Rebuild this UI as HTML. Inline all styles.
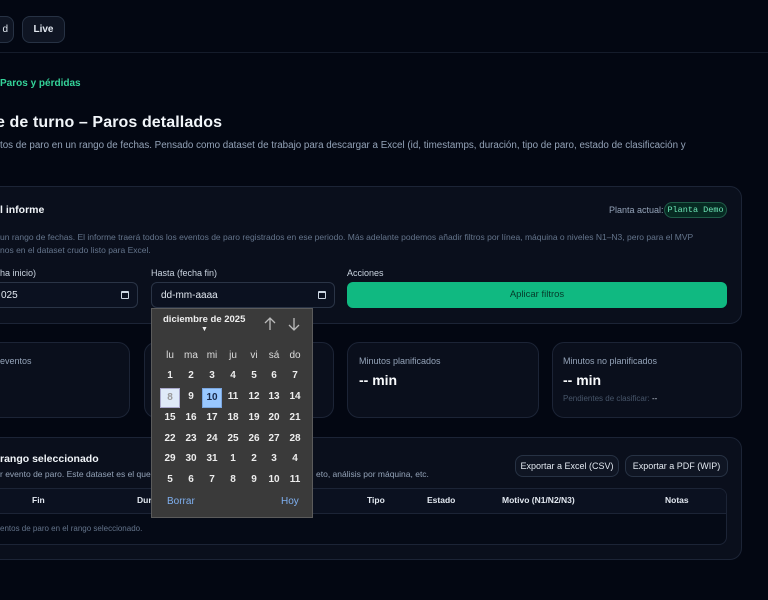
<!DOCTYPE html>
<html><head><meta charset="utf-8"><style>
*{box-sizing:border-box;margin:0;padding:0}
body{width:768px;height:600px;overflow:hidden;background:#030712;font-family:"Liberation Sans",sans-serif;color:#e2e8f0;position:relative}
.a{position:absolute;white-space:nowrap}
.card{position:absolute;background:#0a0f1c;border:1px solid #1c2436;border-radius:12px}
.btn{position:absolute;background:#0f1523;border:1px solid #273244;border-radius:8px;color:#e2e8f0;font-size:10px;display:flex;align-items:center;justify-content:center}
.muted{color:#64748b}
.lbl{font-size:9px;color:#cbd5e1}
.inp{position:absolute;background:#0b1120;border:1px solid #2a3446;border-radius:6px;height:26px;font-size:10px;color:#e2e8f0;padding-left:9px;line-height:26px}
.cal{position:absolute;right:8px;top:8px;width:8px;height:8px;border:1.3px solid #cbd5e1;border-top-width:2.5px;border-radius:1px}
.pop{position:absolute;left:151px;top:308px;width:162px;height:210px;background:#3a3a3a;border:1px solid #5b5b5b;font-size:10px;font-weight:bold;color:#eee}
.c{position:absolute;width:18px;height:18px;text-align:center;line-height:18px}
</style></head><body>
<div class="btn" style="left:-20px;top:16px;width:34px;height:27px;justify-content:flex-end;padding-right:5px">d</div>
<div class="btn" style="left:22px;top:16px;width:43px;height:27px;font-weight:bold">Live</div>
<div class="a" style="left:0;top:52px;width:768px;height:1px;background:#151c2b"></div>
<div class="a" style="left:0;top:78px;font-size:10px;color:#34d399;font-weight:bold">Paros y pérdidas</div>
<div class="a" style="left:-4px;top:114px;font-size:16px;font-weight:bold;color:#f1f5f9;letter-spacing:0.1px">e de turno – Paros detallados</div>
<div class="a" style="left:0;top:140px;font-size:9.8px;color:#94a3b8">tos de paro en un rango de fechas. Pensado como dataset de trabajo para descargar a Excel (id, timestamps, duración, tipo de paro, estado de clasificación y</div>

<div class="card" style="left:-20px;top:186px;width:762px;height:138px"></div>
<div class="a" style="left:0;top:204px;font-size:10.5px;font-weight:bold;color:#f1f5f9">l informe</div>
<div class="a" style="left:609px;top:205px;font-size:9px;color:#94a3b8">Planta actual:</div>
<div class="a" style="left:664px;top:202px;width:63px;height:16px;border:1px solid #1f5c48;background:#062a22;border-radius:8px;font-family:'Liberation Mono',monospace;font-size:8.5px;color:#6ee7b7;text-align:center;line-height:14px">Planta Demo</div>
<div class="a muted" style="left:0;top:232px;font-size:8.5px">un rango de fechas. El informe traerá todos los eventos de paro registrados en ese periodo. Más adelante podemos añadir filtros por línea, máquina o niveles N1–N3, pero para el MVP</div>
<div class="a muted" style="left:0;top:245px;font-size:8.5px">nos en el dataset crudo listo para Excel.</div>
<div class="a lbl" style="left:0;top:268px">ha inicio)</div>
<div class="a lbl" style="left:151px;top:268px">Hasta (fecha fin)</div>
<div class="a lbl" style="left:347px;top:268px">Acciones</div>
<div class="inp" style="left:-20px;top:282px;width:158px;padding-left:20px">025<div class="cal"></div></div>
<div class="inp" style="left:151px;top:282px;width:184px">dd-mm-aaaa<div class="cal"></div></div>
<div class="a" style="left:347px;top:282px;width:380px;height:26px;background:#10b981;border-radius:6px;font-size:9.5px;color:#063a2a;text-align:center;line-height:26px">Aplicar filtros</div>

<div class="card" style="left:-30px;top:342px;width:160px;height:76px"></div>
<div class="a" style="left:0;top:356px;font-size:9px;color:#94a3b8">eventos</div>
<div class="card" style="left:144px;top:342px;width:190px;height:76px"></div>
<div class="card" style="left:347px;top:342px;width:192px;height:76px"></div>
<div class="a" style="left:359px;top:356px;font-size:9px;color:#94a3b8">Minutos planificados</div>
<div class="a" style="left:359px;top:372px;font-size:14px;font-weight:bold;color:#f8fafc">-- min</div>
<div class="card" style="left:552px;top:342px;width:190px;height:76px"></div>
<div class="a" style="left:563px;top:356px;font-size:9px;color:#94a3b8">Minutos no planificados</div>
<div class="a" style="left:563px;top:372px;font-size:14px;font-weight:bold;color:#f8fafc">-- min</div>
<div class="a" style="left:563px;top:394px;font-size:8px;color:#475569">Pendientes de clasificar: <span style="color:#cbd5e1">--</span></div>

<div class="card" style="left:-20px;top:437px;width:762px;height:123px"></div>
<div class="a" style="left:0;top:453px;font-size:10.5px;font-weight:bold;color:#f1f5f9">rango seleccionado</div>
<div class="a muted" style="left:0;top:469px;font-size:8.5px;color:#94a3b8">r evento de paro. Este dataset es el que</div>
<div class="a muted" style="left:316px;top:469px;font-size:8.5px;color:#94a3b8">eto, análisis por máquina, etc.</div>
<div class="btn" style="left:515px;top:455px;width:104px;height:22px;font-size:9px">Exportar a Excel (CSV)</div>
<div class="btn" style="left:625px;top:455px;width:103px;height:22px;font-size:9px">Exportar a PDF (WIP)</div>
<div class="a" style="left:-20px;top:488px;width:747px;height:57px;border:1px solid #1c2436;border-radius:8px;background:#050a16;overflow:hidden">
 <div style="height:25px;background:#0b1120;border-bottom:1px solid #1c2436"></div>
</div>
<div class="a" style="left:0;top:495px;width:768px;font-size:8.5px;font-weight:bold;color:#e2e8f0">
 <span class="a" style="left:32px">Fin</span><span class="a" style="left:137px">Dur</span><span class="a" style="left:367px">Tipo</span><span class="a" style="left:427px">Estado</span><span class="a" style="left:502px">Motivo (N1/N2/N3)</span><span class="a" style="left:665px">Notas</span>
</div>
<div class="a" style="left:0;top:524px;font-size:8px;color:#64748b">entos de paro en el rango seleccionado.</div>

<div class="pop">
 <div class="a" style="left:11px;top:5px;font-size:9.5px">diciembre de 2025</div>
 <div class="a" style="left:49px;top:17px;font-size:7px">▼</div>
 <svg class="a" style="left:112px;top:8px" width="12" height="14" viewBox="0 0 12 14"><path d="M6 13V1M1 6l5-5 5 5" stroke="#bbb" stroke-width="1.3" fill="none"/></svg>
 <svg class="a" style="left:136px;top:8px" width="12" height="14" viewBox="0 0 12 14"><path d="M6 1v12M1 8l5 5 5-5" stroke="#bbb" stroke-width="1.3" fill="none"/></svg>
 <div id="g"></div>
 <div class="a" style="left:15px;top:187px;color:#7fb0f0;font-weight:normal">Borrar</div>
 <div class="a" style="left:129px;top:187px;color:#7fb0f0;font-weight:normal">Hoy</div>
</div>
<script>
var h=["lu","ma","mi","ju","vi","sá","do"],d=[1,2,3,4,5,6,7,8,9,10,11,12,13,14,15,16,17,18,19,20,21,22,23,24,25,26,27,28,29,30,31,1,2,3,4,5,6,7,8,9,10,11],s="";
var xs=[18,39,60,81,102,122,143],ys=[376,397,418,439,459,480];
for(var i=0;i<7;i++)s+='<div class="c" style="left:'+(xs[i]-9)+'px;top:'+(355-308-9)+'px;color:#ddd;font-weight:normal">'+h[i]+'</div>';
for(var k=0;k<42;k++){var r=Math.floor(k/7),c=k%7,st='';
if(k==7)st='background:#dfeaf8;color:#999;border:1px solid #aac;';
if(k==9)st='background:#99c8ff;color:#1a2a4a;border:1px solid #7aa6e0;';
s+='<div class="c" style="left:'+(xs[c]-10)+'px;top:'+(ys[r]-308-10)+'px;width:20px;height:20px;line-height:18px;'+st+'">'+d[k]+'</div>';}
document.getElementById('g').innerHTML=s;
</script>
</body></html>
